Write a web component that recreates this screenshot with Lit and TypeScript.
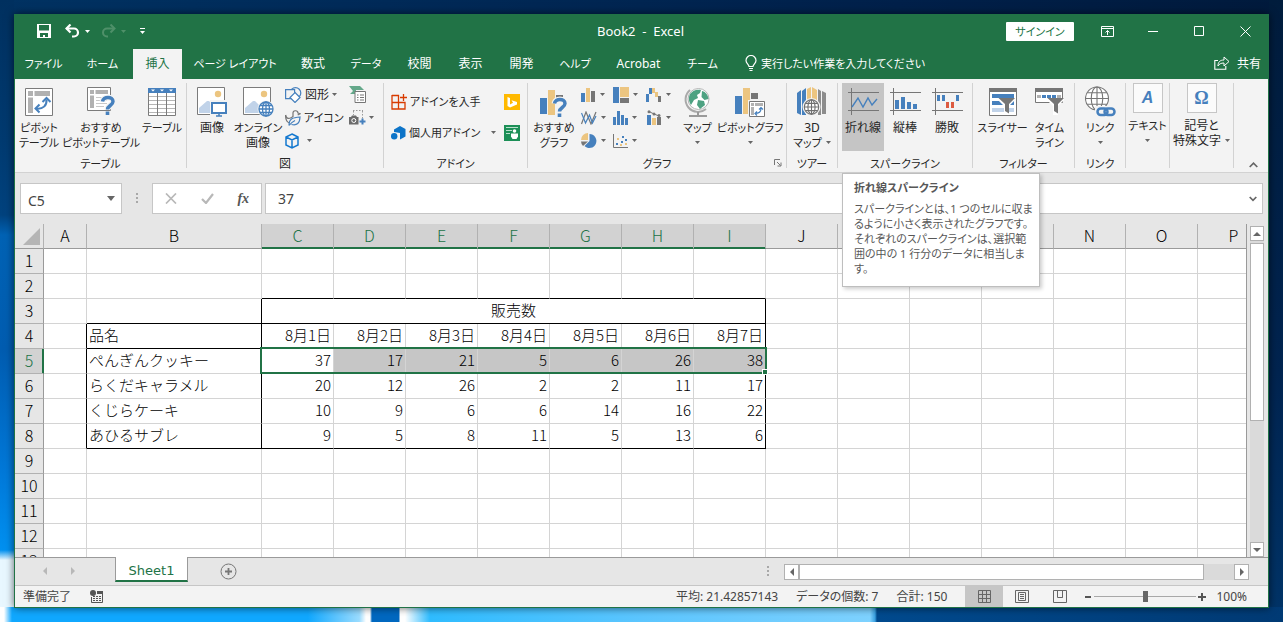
import { LitElement, html, svg, css, nothing } from "lit";
import { customElement } from "lit/decorators.js";
import { classMap } from "lit/directives/class-map.js";

const icon = (w: number, h: number, body: unknown, cls = "") =>
  html`<svg class=${cls} width=${w} height=${h} viewBox="0 0 ${w} ${h}" fill="none" aria-hidden="true">${body}</svg>`;

const caret = icon(5, 3, svg`<path d="M0 0h5L2.500 3z" fill="currentColor"/>`, "caret");

/* ---- title bar ---- */
const saveIcon = icon(14, 14, svg`<path fill-rule="evenodd" fill="#fff" d="M0 0h14v14H0zM2 1v5.500h10V1zM3 9v4h3v-2h2v2h3V9z"/>`);
const undoIcon = icon(15, 14, svg`<path d="M1.500 4.500H9a4 4 0 0 1 0 8H7" stroke="#fff" stroke-width="2.200"/><path d="M5.500 .500L1.500 4.500l4 4" stroke="#fff" stroke-width="2.200"/>`);
const redoIcon = icon(15, 14, svg`<g stroke="#4f9069" stroke-width="2"><path d="M13 4.500H6a4 4 0 0 0 0 8h1"/><path d="M9.500 .500l4 4-4 4"/></g>`);
const customizeIcon = icon(5, 7, svg`<path d="M0 .500h5" stroke="#fff"/><path d="M0 3h5L2.500 6z" fill="#fff"/>`);
const ribbonOptionsIcon = icon(13, 11, svg`<path d="M.500 .500h12v10H.500zM.500 2.500h12M6.500 9V4.500M4.500 6.500l2-2 2 2" stroke="#fff"/>`);
const minIcon = icon(10, 10, svg`<path d="M0 5.500h10" stroke="#fff"/>`);
const maxIcon = icon(10, 10, svg`<path d="M.500 .500h9v9h-9z" stroke="#fff"/>`);
const closeIcon = icon(11, 11, svg`<path d="M.500 .500l10 10M10.500 .500l-10 10" stroke="#fff"/>`);
const bulbIcon = icon(12, 16, svg`<path d="M4 11.500c0-2-3-3-3-6a5 5 0 0 1 10 0c0 3-3 4-3 6zM4 13.500h4M4.500 15.500h3" stroke="#fff" stroke-width="1.200"/>`);
const shareIcon = icon(16, 14, svg`<path d="M4 4.500H.800v8.700h11V10" stroke="#fff" stroke-width="1.100"/><path d="M4 10c0-4 2-6 6-6V1l5 4.500L10 10V7C7 7 5 8 4 10z" stroke="#fff"/>`);

/* ---- ribbon ---- */
const pivotIcon = icon(28, 28, svg`
  <path d="M.500 .500h27v27H.500z" fill="#fff" stroke="#7b7b7b"/>
  <path d="M3 3h5v5H3zM9.500 3H25v5H9.500zM3 9.500h5V25H3z" fill="#b1b1b1"/>
  <path d="M11 20.500c7 1 11-3 10.500-9" stroke="#4680bd" stroke-width="2"/>
  <path d="M17.500 14l4-4 4 4M14.500 16.500l-4 4 4 4" stroke="#4680bd" stroke-width="2"/>`);
const question = (x: number, y: number) => svg`<g transform="translate(${x} ${y})"><path d="M1.500 5.500C2 0 12 0 12 5.500c0 4-5.500 4-5.500 8" stroke="#f3f3f3" stroke-width="6"/><path d="M1.500 5.500C2 0 12 0 12 5.500c0 4-5.500 4-5.500 8" stroke="#4680bd" stroke-width="3.500"/><path d="M4.700 15.500h3.600v3.500H4.700z" fill="#4680bd"/></g>`;
const recPivotIcon = icon(28, 29, svg`
  <path d="M.500 .500h23v23H.500z" fill="#fff" stroke="#7b7b7b"/>
  <path d="M3 3h4v4H3zM8.500 3H21v4H8.500zM3 8.500h4V21H3z" fill="#b1b1b1"/>
  <path d="M9 10.500h11M9 13.500h11M9 16.500h11M9 19.500h8" stroke="#c8c8c8"/>${question(14, 9)}`);
const tableIcon = icon(28, 28, svg`
  <path d="M.500 .500h27v27H.500z" fill="#fff" stroke="#7b7b7b"/>
  <path d="M0 0h28v5H0z" fill="#4680bd"/>
  <path d="M3 1.500h4l-2 2zM12 1.500h4l-2 2zM21 1.500h4l-2 2z" fill="#fff"/>
  <path d="M1 8.500h26M1 12.500h26M1 16.500h26M1 20.500h26M1 24.500h26" stroke="#b5b5b5"/>
  <path d="M9.500 5v22M18.500 5v22" stroke="#7b7b7b"/>`);
const photoBase = svg`
  <path d="M.500 .500h27v27H.500z" fill="#fff" stroke="#7b7b7b"/>
  <circle cx="21" cy="7" r="3.200" fill="#ecc580"/>
  <path d="M2 26v-5l8-7h2l7 7v5z" fill="#c1d3e9"/>`;
const pictureIcon = icon(31, 30, svg`${photoBase}
  <path d="M13 13h18v17H13z" fill="#f3f3f3"/><path d="M15 16h14v10H15z" fill="#fff" stroke="#4680bd" stroke-width="2"/><path d="M19 29h6M22 27v2" stroke="#4680bd" stroke-width="1.500"/>`);
const globe = (cx: number, cy: number, r: number, c: string, bg: string, w = 1.300) => svg`
  <circle cx=${cx} cy=${cy} r=${r} fill=${bg} stroke=${c} stroke-width=${w}/>
  <ellipse cx=${cx} cy=${cy} rx=${r / 2} ry=${r} stroke=${c} stroke-width=${w}/>
  <path d="M${cx} ${cy - r}v${2 * r}M${cx - r} ${cy}h${2 * r}M${cx - r * 0.85} ${cy - r / 2}h${r * 1.7}M${cx - r * 0.85} ${cy + r / 2}h${r * 1.7}" stroke=${c} stroke-width=${w}/>`;
const onlinePictureIcon = icon(31, 30, svg`${photoBase}<circle cx="23" cy="22" r="8.500" fill="#f3f3f3"/>${globe(23, 22, 7, "#4680bd", "#fff")}`);
const shapesIcon = icon(17, 16, svg`
  <circle cx="10.500" cy="6" r="5.300" fill="#f3f3f3" stroke="#4680bd" stroke-width="1.200"/>
  <path d="M.600 2.600h9v9h-9z" fill="#f3f3f3" stroke="#4680bd" stroke-width="1.200"/>
  <path d="M10 5.500l5 5-5 5-5-5z" fill="#fff" stroke="#4680bd" stroke-width="1.200"/>`);
const iconsIcon = icon(16, 16, svg`
  <path d="M.600 5c1 4 3 4 6 2.500L8 6.500V3.500a2.500 2.500 0 0 1 5-.500l2 .800-2.300 1.200M.600 5c-.200 4 1 7 4 8" stroke="#767676" stroke-width="1.200"/>
  <path d="M4 15.500c0-7 4-8 11-8.500-.200 6-3 9-8.500 7.500M4 15.500c2-2.500 4-4 6-5" stroke="#4680bd" stroke-width="1.200"/>`);
const cubeIcon = icon(14, 16, svg`<path d="M7 1l6 3v8l-6 3-6-3V4zM1 4l6 3 6-3M7 7v8" stroke="#1579d0" stroke-width="1.500"/>`);
const screenshotIcon = icon(17, 17, svg`
  <path d="M0 0h11l4 4H7v4H1l3-3z" fill="#64a88a"/>
  <path d="M6 5.500h10.500v11H6z" fill="#fff" stroke="#767676"/>
  <path d="M8 9h1.500M11 9h4M8 11.500h1.500M11 11.500h4M8 14h1.500M11 14h4" stroke="#767676"/>`);
const cameraIcon = icon(17, 15, svg`
  <path d="M4 .500h10M13.500 1v8M4.500 1v4" stroke="#9a9a9a" stroke-dasharray="1.500 1.500"/>
  <path d="M0 7h2l1-1.500h4L8 7h1.500v7.500H0z" fill="#6b6b6b"/><circle cx="4.800" cy="10.500" r="2" stroke="#fff"/>
  <path d="M10.500 11.500h6M13.500 8.500v6" stroke="#4680bd" stroke-width="2"/>`);
const storeIcon = icon(16, 16, svg`<path d="M1 1.500h6.500v13.500M1 1v14h13V8.500H1M12.500 0v7M9 3.500h7" stroke="#d83b01" stroke-width="1.300"/>`);
const myAddinsIcon = icon(15, 14, svg`<path d="M3 3.500L9 0l5.500 3v7.500L9 13.500V7L3 6z" fill="#0d74c8"/><circle cx="3.200" cy="10.300" r="3.200" fill="#0d74c8"/>`);
const bingIcon = icon(16, 16, svg`<path d="M0 0h16v16H0z" fill="#ffb900"/><path d="M3.500 3L6 4v6.500l3-1.700-1.500-2.500L13 8v2.500l-7 3L3.500 12z" fill="#fff"/>`);
const peopleIcon = icon(16, 16, svg`<path d="M0 0h16v16H0z" fill="#1c8f57"/><path d="M2 2.500h12M2 5.500h6M2 8.500h4" stroke="#b9e0cc"/><circle cx="10.500" cy="6" r="1.800" fill="#fff"/><path d="M7 8.500h7v3l-1.500 2.500h-4L7 11.500z" fill="#fff"/>`);
const recChartIcon = icon(28, 30, svg`
  <path d="M0 11h7v16H0z" fill="#4680bd"/><path d="M8 3h7v25H8z" fill="#ecc580"/><path d="M16 8h7v4h-7z" fill="#767676"/>${question(13, 11)}`);
const columnIcon = icon(15, 14, svg`<path d="M0 5h4v9H0z" fill="#4680bd"/><path d="M5 0h4v14H5z" fill="#ecc580"/><path d="M10 3h4v11h-4z" fill="#767676"/>`);
const treemapIcon = icon(16, 16, svg`<path d="M0 0h6v16H0z" fill="#4680bd"/><path d="M7 0h9v10H7z" fill="#ecc580"/><path d="M7 11h9v5H7z" fill="#767676"/>`);
const waterfallIcon = icon(16, 14, svg`<path d="M0 6h3v8H0zM3 0h3v6H3z" fill="#4680bd"/><path d="M6 0h3v5H6zM9 4h3v5H9z" fill="#ecc580"/><path d="M12 8h3v6h-3z" fill="#767676"/>`);
const lineChartIcon = icon(16, 14, svg`<path d="M.500 13L5 1l5 12 5-12" stroke="#767676" stroke-width="1.200"/><path d="M.500 2l4 10 4-8 3 8L15 5" stroke="#4680bd" stroke-width="1.200"/>`);
const histogramIcon = icon(15, 14, svg`<path d="M0 6h3v8H0zM4 0h3v14H4zM8 4h3v10H8zM12 7h3v7h-3z" fill="#4680bd"/>`);
const comboIcon = icon(16, 15, svg`<path d="M1 5h4v10H1z" fill="#4680bd"/><path d="M6 8h4v7H6z" fill="#ecc580"/><path d="M11 7h4v8h-4z" fill="#767676"/><path d="M3 1.500L8 4l5 2" stroke="#767676"/><circle cx="3" cy="1.700" r="1.500" fill="#767676"/><circle cx="8" cy="4" r="1.500" fill="#767676"/><circle cx="13" cy="5.500" r="1.500" fill="#767676"/>`);
const pieIcon = icon(16, 16, svg`<path d="M8.500 8V1a7 7 0 1 1-5 12z" fill="#4680bd"/><path d="M7 7V0a7 7 0 0 0-7 7z" fill="#ecc580"/><path d="M7 8.500H0a7 7 0 0 0 2 4.500z" fill="#767676"/>`);
const scatterIcon = icon(15, 14, svg`<path d="M.500 0v13.500H15" stroke="#767676"/><path d="M3 9h2v2H3zM9 2h2v2H9zM8 7h2v2H8zM12 5h2v2h-2z" fill="#4680bd"/><path d="M4 4h2v2H4zM7 10h2v2H7zM12 9h2v2h-2z" fill="#ecc580"/>`);
const mapIcon = icon(27, 32, svg`
  <path d="M6 4a12 12 0 1 0 16 19" stroke="#a9a9a9" stroke-width="2"/>
  <path d="M14 26v3M5 30h18" stroke="#9a9a9a" stroke-width="2"/>
  <circle cx="14.500" cy="13" r="10.500" fill="#fff" stroke="#b5b5b5"/>
  <path d="M6 8c3-4 7-5 11-4l-1 3-3 2 1 3-4 2-3 5c-2-3-3-7-1-11zM18 5c4 1 6 4 6.500 8l-4 1-3-3zM14 14l6 1 1 4-5 4-3-4z" fill="#4ea282"/>`);
const pivotChartIcon = icon(31, 30, svg`
  <path d="M0 9h7v18H0z" fill="#4680bd"/><path d="M8 1h7v26H8z" fill="#ecc580"/><path d="M16 6h7v6h-7z" fill="#767676"/>
  <path d="M13 13h18v17H13z" fill="#f3f3f3"/><path d="M14.500 14.500h15v15h-15z" fill="#fff" stroke="#767676"/>
  <path d="M16 16h3v3h-3zM20 16h8v3h-8zM16 20h3v8h-3z" fill="#b1b1b1"/>
  <path d="M20 26.500c4 0 6-1 6-5M22 24.500l-2 2 2 2M24 22.500l2-2 2 2" stroke="#4680bd" stroke-width="1.200"/>`);
const map3dIcon = icon(30, 30, svg`
  <path d="M0 6l4-3v25l-4-2zM5 4l4-3v27H5z" fill="#4680bd"/><path d="M10 2l4-2v26h-4zM15 0l5 3v23h-5z" fill="#ecc580"/>
  <path d="M21 2l3 2v24h-3zM25 4l4 2v21h-4z" fill="#8c8c8c"/>
  <circle cx="14.500" cy="20" r="9" fill="#f3f3f3"/>${globe(14.5, 20, 7.2, "#6f6f6f", "#fff", 1.1)}`);
const sparkFrame = svg`<path d="M0 4.500h31M0 22.500h31M3.500 0v27" stroke="#767676"/>`;
const sparkLineIcon = icon(31, 27, svg`${sparkFrame}<path d="M4 19l6-9 5 9 5-9 4 7 5-6" stroke="#4680bd" stroke-width="1.400"/>`);
const sparkColumnIcon = icon(31, 27, svg`${sparkFrame}<path d="M5 12h4v9H5zM11 9h4v12h-4zM17 14h4v7h-4zM23 16h4v5h-4z" fill="#4680bd"/>`);
const sparkWinIcon = icon(31, 27, svg`${sparkFrame}<path d="M5 7h3v6H5zM10 7h3v6h-3zM24 7h3v6h-3z" fill="#4680bd"/><path d="M14 14h3v6h-3zM19 14h3v6h-3z" fill="#dd5b41"/>`);
const funnel = (x: number, y: number) => svg`<g transform="translate(${x} ${y})"><path d="M0 0h17v2l-6 6v9H6V8L0 2z" fill="#fff"/><path d="M.500 0h16.500L11 6v9.500L7 13V6z" fill="#767676"/></g>`;
const slicerIcon = icon(28, 28, svg`
  <path d="M.500 .500h27v27H.500z" fill="#fff" stroke="#767676"/><path d="M0 0h28v4H0z" fill="#767676"/>
  <path d="M3 6h22v4H3zM3 13h22v4H3z" fill="#4680bd"/><path d="M3 20h22v4H3z" fill="#c1d3e9"/>${funnel(9, 10)}`);
const timelineIcon = icon(29, 27, svg`
  <path d="M.500 .500h27v14H.500z" fill="#fff" stroke="#767676"/><path d="M0 0h28v4H0z" fill="#767676"/>
  <path d="M2 7h4v3H2zM22 7h4v3h-4z" fill="#b1b1b1"/><path d="M7 7h4v3H7zM12 7h4v3h-4zM17 7h4v3h-4z" fill="#4680bd"/>${funnel(12, 10)}`);
const linkIcon = icon(31, 31, svg`${globe(12, 12.5, 11.5, "#767676", "#fff", 1.1)}
  <rect x="10" y="20" width="21" height="11" fill="#f3f3f3"/>
  <rect x="12.500" y="22.500" width="10" height="6.500" rx="3.200" stroke="#4680bd" stroke-width="2.500"/><rect x="19.500" y="22.500" width="10" height="6.500" rx="3.200" stroke="#4680bd" stroke-width="2.500"/>`);
const launcherIcon = icon(8, 8, svg`<path d="M.500 6V.500H6M3 3l3.500 3.500M7 3.500V7H3.500" stroke="#767676"/>`);
const collapseIcon = icon(9, 6, svg`<path d="M.700 5l3.800-3.800L8.300 5" stroke="#666" stroke-width="1.700"/>`);

/* ---- formula bar, sheet tabs, status bar ---- */
const cancelIcon = icon(12, 11, svg`<path d="M1 .500l10 10M11 .500L1 10.500" stroke="#b8b8b8" stroke-width="1.700"/>`);
const enterIcon = icon(13, 11, svg`<path d="M1 6l4 4 7-9" stroke="#b8b8b8" stroke-width="2.200"/>`);
const dotsIcon = icon(2, 11, svg`<path d="M0 0h2v2H0zM0 4h2v2H0zM0 8h2v2H0z" fill="#a8a8a8"/>`);
const expandIcon = icon(8, 6, svg`<path d="M.700 1L4 4.300 7.300 1" stroke="#666" stroke-width="1.700"/>`);
const cornerIcon = icon(17, 17, svg`<path d="M17 0v17H0z" fill="#b5b5b5"/>`);
const arrow = (d: string) => icon(8, 8, svg`<path d=${d} fill="currentColor"/>`);
const UP = "M0 6h8L4 2z", DOWN = "M0 2h8L4 6z", LEFT = "M6 0v8L2 4z", RIGHT = "M2 0v8l4-4z";
const addIcon = icon(17, 17, svg`<circle cx="8.500" cy="8.500" r="7.500" stroke="#767676"/><path d="M8.500 5v7M5 8.500h7" stroke="#767676" stroke-width="1.800"/>`);
const macroIcon = icon(13, 13, svg`<circle cx="3" cy="3" r="3" fill="#555"/><path d="M7 1h6v3H7z" fill="#555"/><path d="M1.500 7v5.500h11V3" stroke="#555"/><path d="M3 6.500h2M6 6.500h2M9 6.500h2M3 8.500h2M6 8.500h2M9 8.500h2M3 10.500h2M6 10.500h2M9 10.500h2" stroke="#555"/>`);
const normalViewIcon = icon(13, 13, svg`<path d="M.500 .500h12v12H.500zM4.500 0v13M8.500 0v13M0 4.500h13M0 8.500h13" stroke="#666"/>`);
const pageViewIcon = icon(14, 13, svg`<path d="M.500 .500h13v12H.500zM3.500 2.500h7v8h-7zM5 4.500h4M5 6.500h4M5 8.500h4" stroke="#666"/>`);
const breakViewIcon = icon(14, 13, svg`<path d="M.500 .500h13v12H.500zM4.500 0v7.500h5V0M9.500 7.500V.500" stroke="#666"/>`);

const TABS = ["ファイル", "ホーム", "挿入", "ページ レイアウト", "数式", "データ", "校閲", "表示", "開発", "ヘルプ", "Acrobat", "チーム"];
const CHARTS: [string, unknown][] = [
  ["縦棒/横棒", columnIcon], ["階層構造", treemapIcon], ["ウォーターフォール", waterfallIcon],
  ["折れ線/面", lineChartIcon], ["統計", histogramIcon], ["複合", comboIcon],
  ["円/ドーナツ", pieIcon], ["散布図", scatterIcon],
];

const COLS = "ABCDEFGHIJKLMNOP".split("");
const CELLS: Record<number, (string | number)[]> = {
  4: ["品名", "8月1日", "8月2日", "8月3日", "8月4日", "8月5日", "8月6日", "8月7日"],
  5: ["ぺんぎんクッキー", 37, 17, 21, 5, 6, 26, 38],
  6: ["らくだキャラメル", 20, 12, 26, 2, 2, 11, 17],
  7: ["くじらケーキ", 10, 9, 6, 6, 14, 16, 22],
  8: ["あひるサブレ", 9, 5, 8, 11, 5, 13, 6],
};

/* Labels written in kana alone are set one size smaller than those with kanji. */
const isKana = (t: unknown) => typeof t === "string" && /^[\u3040-\u30ff ]+$/.test(t);
const label = (t: unknown) => (isKana(t) ? html`<span class="kana">${t}</span>` : t);

const big = (art: unknown, lines: unknown[], cls = "") =>
  html`<button class="big ${cls}"><span class="art">${art}</span>${lines.map((l) => html`<span class="line">${label(l)}</span>`)}</button>`;

@customElement("app-root")
export class AppRoot extends LitElement {
  static styles = css`
    :host {
      display: flex;
      height: 100vh;
      box-sizing: border-box;
      padding: 14px;
      overflow: hidden;
      font: 12px/15px "Noto Sans", "Noto Sans CJK JP", sans-serif;
      font-feature-settings: "palt";
      color: #262626;
      background:
        linear-gradient(90deg, #fff 0 4px, #10a8ff 12px 24%, #9adcff 28%, #fff 366px 370px, #0068c0 372px 399px, #fff 400px 405px, #2fbcff 430px, #5cc6ff 50%, #7ed2ff 870px, #3aa0e0 875px, #004a8e 877px, #003a74) bottom / 100% 15px no-repeat,
        linear-gradient(180deg, #00305f 0, #003a70 140px, #00427e 215px, #0062b4 235px, #005cb0 350px, #0078d8 470px, #0090f0 550px, #e8f7ff 560px 100%) left / 14px 100% no-repeat,
        linear-gradient(180deg, #001c3c, #002450 60%, #003468) right / 14px 100% no-repeat,
        linear-gradient(90deg, #003262, #002a58 30%, #00204a 70%, #001a3c);
    }
    button, input { font: inherit; font-feature-settings: inherit; color: inherit; margin: 0; padding: 0; border: 0; background: none; border-radius: 0; outline: 0; }
    button { display: flex; align-items: center; justify-content: center; white-space: nowrap; flex: none; }
    svg { display: block; flex: none; }
    .kana { font-size: 11px; }
    .caret { color: #666; }
    .window {
      flex: 1;
      min-width: 0;
      display: flex;
      flex-direction: column;
      border: 1px solid #217346;
      background: #e6e6e6;
      box-shadow: 0 0 8px rgba(0, 0, 0, 0.6);
    }

    .title { display: grid; grid-template-columns: 1fr auto 1fr; align-items: center; height: 32px; padding-bottom: 2px; background: #217346; color: #fff; }
    .quick { display: flex; align-items: center; padding-left: 22px; gap: 5px; }
    .quick .caret { color: #fff; }
    .quick .dim .caret { color: #4f9069; }
    .quick button { gap: 5px; }
    .quick button:first-child { margin-right: 9px; }
    .quick .dim { margin: 0 9px 0 6px; }
    .caption { white-space: pre; font-size: 13px; padding-right: 2px; }
    .sys { display: flex; justify-content: flex-end; align-items: center; }
    .sys button { width: 46px; height: 30px; }
    .sys .signin { width: 68px; height: 19px; margin-right: 10px; background: #fff; color: #217346; border-radius: 1px; }
    .tabs { display: flex; height: 30px; background: #217346; color: #fff; }
    .tablist { display: grid; grid-template-columns: 57px 61px 49px 106px 50px 56px 51px 51px 51px 56px 71px 57px; }
    .tablist button, .tell, .share { padding-bottom: 2px; }
    .tablist .on { background: #f3f3f3; color: #217346; }
    .tell { padding-left: 14px; gap: 4px; font-size: 11px; }
    .share { margin-left: auto; padding-right: 7px; gap: 7px; }

    .ribbon { display: flex; height: 93px; background: #f3f3f3; border-bottom: 1px solid #d2d2d2; }
    .group { position: relative; display: flex; flex-direction: column; margin: 4px 0; border-right: 1px solid #d2d2d2; box-sizing: border-box; flex: none; }
    .body { flex: 1; display: flex; }
    .name { text-align: center; height: 15px; margin-bottom: -3px; }
    .big { flex-direction: column; justify-content: flex-start; height: 68px; }
    .art { display: flex; height: 37px; align-items: center; justify-content: center; }
    .line { display: flex; align-items: center; height: 15px; gap: 4px; }
    .on-art { background: #c5c5c5; }
    .g-table { width: 172px; }
    .g-table .body { display: grid; grid-template-columns: 48px 76px 46px; }
    .g-pic { width: 197px; }
    .g-pic .body { padding-left: 2px; }
    .g-pic .big { width: 46px; }
    .small { display: flex; flex-direction: column; }
    .small button { height: 23px; gap: 3px; justify-content: flex-start; }
    .small .model { gap: 8px; }
    .g-pic .small { width: 60px; padding-left: 4px; }
    .g-pic .small:last-child { width: 30px; }
    .g-addin { width: 144px; }
    .addins { display: grid; grid-template-columns: 105px 16px; column-gap: 8px; grid-auto-rows: 31px; padding: 3px 0 0 7px; align-items: center; font-size: 11px; }
    .addins button { justify-content: flex-start; gap: 3px; }
    .addins .wide .caret { margin-left: auto; }
    .g-chart { width: 259px; }
    .g-chart .big { width: 52px; }
    .charts { display: grid; grid-template-columns: 32px 33px 30px; grid-auto-rows: 23px; margin-left: 1px; }
    .charts button { justify-content: flex-start; gap: 4px; }
    .g-chart .map { width: 43px; }
    .g-chart .pivot { width: 62px; }
    .launch { position: absolute; right: 3px; bottom: 0; width: 10px; height: 10px; }
    .g-tour { width: 51px; }
    .g-spark { width: 135px; }
    .g-spark .body { padding-left: 4px; }
    .g-spark .big { width: 42px; }
    .g-filter { width: 102px; }
    .g-filter .body { padding-left: 6px; }
    .g-filter .big { width: 47px; }
    .g-link { width: 51px; }
    .g-text { width: 44px; }
    .g-sym { width: 64px; }
    .g-tour .big, .g-link .big, .g-text .big, .g-sym .big { flex: 1; }
    .g-text .art, .g-sym .art { height: 35px; align-items: flex-start; }
    .tile { display: grid; place-items: center; width: 28px; height: 28px; border: 1px solid #c6c6c6; background: #fbfbfb; color: #4680bd; font: 700 18px/20px "Liberation Serif", serif; }
    .tile.slant { font: italic 700 16px/20px "Liberation Sans", sans-serif; }
    .collapse { margin: auto 10px 4px auto; }

    .tip {
      position: absolute;
      z-index: 5;
      left: 4px;
      top: 90px;
      width: 185px;
      padding: 6px 0 10px 11px;
      border: 1px solid #bebebe;
      background: #fff;
      box-shadow: 2px 2px 4px rgba(0, 0, 0, 0.2);
      color: #575757;
      font-size: 11px;
      white-space: nowrap;
    }
    .tip b { display: block; margin-bottom: 6px; font-weight: 700; }

    .formula { display: flex; align-items: center; height: 51px; padding: 0 5px; font-size: 14px; color: #444; }
    .box { display: flex; align-items: center; height: 29px; border: 1px solid #c6c6c6; background: #fff; }
    .box input { flex: 1; min-width: 0; padding: 0 12px; }
    .namebox { width: 100px; }
    .namebox input { padding: 4px 0 0 7px; }
    .namebox button { width: 20px; }
    .namebox .caret { width: 8px; height: 5px; }
    .formula > svg { margin: 0 14px; }
    .tools { width: 108px; justify-content: space-around; margin-right: 3px; }
    .tools .fx { font: italic 700 14px/16px "Liberation Serif", serif; color: #555; }
    .entry { flex: 1; }
    .entry button { width: 18px; }

    .sheet { flex: 1; min-height: 0; display: flex; }
    .grid { flex: 1; min-width: 0; overflow: hidden; border-right: 1px solid #9a9a9a; }
    table { border-collapse: separate; border-spacing: 0; table-layout: fixed; width: 1255px; font: 300 15px/22px "Noto Sans CJK JP", sans-serif; font-feature-settings: normal; color: #000; }
    .c-head { width: 29px; } .c-a { width: 43px; } .c-b { width: 175px; } .c-n { width: 72px; }
    th, td { padding: 0 2px 2px; height: 22px; border: 0 solid #d4d4d4; border-width: 0 1px 1px 0; font-weight: inherit; white-space: nowrap; overflow: hidden; }
    td { background: #fff; text-align: right; }
    td.txt { text-align: left; }
    td.mid { text-align: center; }
    th { background: #e6e6e6; text-align: center; padding: 0 0 2px; }
    thead th { border-color: #b1b1b1; border-bottom-color: #9a9a9a; font-size: 16px; }
    tbody th { border-right-color: #9a9a9a; border-bottom-color: #b1b1b1; font-size: 16px; }
    th.sel { background: #d2d2d2; color: #217346; }
    thead th.sel { box-shadow: inset 0 -1px #217346; border-bottom-color: #217346; }
    tbody th.sel { box-shadow: inset -1px 0 #217346; border-right-color: #217346; }
    .corner svg { margin: 3px 3px 0 auto; }
    td.bb { border-bottom-color: #000; }
    td.br { border-right-color: #000; }
    td.fill { background: #c6c6c6; }
    td.active { position: relative; overflow: visible; }
    .range { position: absolute; z-index: 2; left: -2px; top: -2px; width: 503px; height: 23px; border: 2px solid #217346; pointer-events: none; }
    .range::after { content: ""; position: absolute; right: -3px; bottom: -3px; width: 4px; height: 4px; border: 1px solid #fff; background: #217346; }

    .vbar { width: 14px; padding: 2px 4px 0 3px; display: flex; flex-direction: column; }
    .vbar button, .hbar button { border: 1px solid #b1b1b1; background: #fff; color: #666; box-sizing: border-box; }
    .vbar button { height: 15px; }
    .track { flex: 1; display: flex; background: #dadada; }
    .vbar .track { flex-direction: column; }
    .thumb { background: #fff; border: 1px solid #b1b1b1; box-sizing: border-box; }
    .vbar .thumb { height: 59%; margin-top: 2px; }

    .sheets { display: flex; height: 28px; align-items: flex-start; color: #b8b8b8; }
    .nav { display: flex; box-sizing: border-box; width: 100px; height: 27px; padding: 0 38px 0 26px; justify-content: space-between; border-top: 1px solid #9a9a9a; }
    .sheettab { width: 73px; height: 25px; box-sizing: border-box; padding-top: 4px; background: #fff; color: #217346; border: 0 solid #9a9a9a; border-width: 0 1px; border-bottom: 2px solid #217346; font: 13px/16px "DejaVu Sans", Verdana, sans-serif; }
    .rest { flex: 1; display: flex; align-items: center; height: 28px; box-sizing: border-box; border-top: 1px solid #9a9a9a; padding: 0 19px 0 32px; }
    .rest > svg { margin: 0 15px 0 auto; }
    .hbar { display: flex; width: 465px; height: 16px; }
    .hbar button { width: 15px; }
    .hbar .thumb { width: 93%; }

    .status { display: flex; align-items: center; height: 21px; border-top: 1px solid #c6c6c6; background: #f3f3f3; color: #444; padding: 0 21px 0 8px; }
    .status .stats { margin-left: auto; display: flex; gap: 18px; padding-right: 18px; }
    .status .macro { margin-left: 19px; }
    .view { width: 38px; height: 21px; }
    .view.on { background: #c6c6c6; }
    .zoom { display: flex; align-items: center; gap: 2px; margin-left: 5px; }
    .zoom button { width: 8px; height: 12px; }
    .zoom input { appearance: none; width: 102px; height: 14px; background: linear-gradient(#a8a8a8, #a8a8a8) center / 100% 1px no-repeat; }
    .zoom input::-webkit-slider-thumb { appearance: none; width: 5px; height: 11px; background: #666; }
    .pct { margin-left: 10px; }
  `;

  private cell(row: number, c: number) {
    const v = CELLS[row]?.[c - 1];
    const inTable = c >= 1 && c <= 8;
    const cls = {
      txt: c === 1,
      fill: row === 5 && c > 2 && c <= 8,
      active: row === 5 && c === 2,
      bb: (row === 2 && c > 1 && inTable) || ([3, 4, 8].includes(row) && inTable),
      br: (c === 0 && row >= 4 && row <= 8) || ((c === 1 || c === 8) && row >= 3 && row <= 8),
    };
    return html`<td class=${classMap(cls)}>${v ?? nothing}${cls.active ? html`<div class="range"></div>` : nothing}</td>`;
  }

  private row(row: number) {
    const cells = COLS.map((_, c) => {
      if (row === 3 && c === 2) return html`<td class="mid bb br" colspan="7">販売数</td>`;
      if (row === 3 && c > 2 && c <= 8) return nothing;
      return this.cell(row, c);
    });
    return html`<tr><th scope="row" class=${row === 5 ? "sel" : ""}>${row}</th>${cells}</tr>`;
  }

  render() {
    return html`
      <div class="window">
        <header class="title">
          <div class="quick">
            <button aria-label="上書き保存">${saveIcon}</button>
            <button aria-label="元に戻す">${undoIcon}${caret}</button>
            <button class="dim" aria-label="やり直し">${redoIcon}${caret}</button>
            <button aria-label="クイック アクセス ツール バー">${customizeIcon}</button>
          </div>
          <div class="caption">Book2  -  Excel</div>
          <div class="sys">
            <button class="signin">${label("サインイン")}</button>
            <button aria-label="リボンの表示オプション">${ribbonOptionsIcon}</button>
            <button aria-label="最小化">${minIcon}</button>
            <button aria-label="最大化">${maxIcon}</button>
            <button aria-label="閉じる">${closeIcon}</button>
          </div>
        </header>
        <nav class="tabs">
          <div class="tablist">${TABS.map((t) => html`<button class=${t === "挿入" ? "on" : ""}>${label(t)}</button>`)}</div>
          <button class="tell">${bulbIcon}実行したい作業を入力してください</button>
          <button class="share">${shareIcon}共有</button>
        </nav>

        <section class="ribbon">
          <div class="group g-table">
            <div class="body">
              ${big(pivotIcon, ["ピボット", "テーブル"])}
              ${big(recPivotIcon, ["おすすめ", "ピボットテーブル"])}
              ${big(tableIcon, ["テーブル"])}
            </div>
            <div class="name">${label("テーブル")}</div>
          </div>
          <div class="group g-pic">
            <div class="body">
              ${big(pictureIcon, ["画像"])}
              ${big(onlinePictureIcon, ["オンライン", "画像"])}
              <div class="small">
                <button>${shapesIcon}図形${caret}</button>
                <button>${iconsIcon}${label("アイコン")}</button>
                <button class="model" aria-label="3D モデル">${cubeIcon}${caret}</button>
              </div>
              <div class="small">
                <button aria-label="SmartArt">${screenshotIcon}</button>
                <button aria-label="スクリーンショット">${cameraIcon}${caret}</button>
              </div>
            </div>
            <div class="name">図</div>
          </div>
          <div class="group g-addin">
            <div class="body">
              <div class="addins">
                <button>${storeIcon}アドインを入手</button>
                <button aria-label="Bing">${bingIcon}</button>
                <button class="wide">${myAddinsIcon}個人用アドイン${caret}</button>
                <button aria-label="People Graph">${peopleIcon}</button>
              </div>
            </div>
            <div class="name">${label("アドイン")}</div>
          </div>
          <div class="group g-chart">
            <div class="body">
              ${big(recChartIcon, ["おすすめ", "グラフ"])}
              <div class="charts">${CHARTS.map(([n, i]) => html`<button aria-label=${n}>${i}${caret}</button>`)}</div>
              ${big(mapIcon, ["マップ", caret], "map")}
              ${big(pivotChartIcon, ["ピボットグラフ", caret], "pivot")}
            </div>
            <div class="name">${label("グラフ")}</div>
            <button class="launch" aria-label="グラフの詳細">${launcherIcon}</button>
          </div>
          <div class="group g-tour">
            <div class="body">${big(map3dIcon, ["3D", html`${label("マップ")}${caret}`])}</div>
            <div class="name">${label("ツアー")}</div>
          </div>
          <div class="group g-spark">
            <div class="body">
              ${big(sparkLineIcon, ["折れ線"], "on-art")}
              ${big(sparkColumnIcon, ["縦棒"])}
              ${big(sparkWinIcon, ["勝敗"])}
            </div>
            <div class="name">${label("スパークライン")}</div>
            <div class="tip" role="tooltip">
              <b>折れ線スパークライン</b>
              スパークラインとは、1 つのセルに収ま<br />るように小さく表示されたグラフです。<br />それぞれのスパークラインは、選択範<br />囲の中の 1 行分のデータに相当しま<br />す。
            </div>
          </div>
          <div class="group g-filter">
            <div class="body">
              ${big(slicerIcon, ["スライサー"])}
              ${big(timelineIcon, ["タイム", "ライン"])}
            </div>
            <div class="name">${label("フィルター")}</div>
          </div>
          <div class="group g-link">
            <div class="body">${big(linkIcon, ["リンク", caret])}</div>
            <div class="name">${label("リンク")}</div>
          </div>
          <div class="group g-text">
            <div class="body">${big(html`<span class="tile slant">A</span>`, ["テキスト", caret])}</div>
          </div>
          <div class="group g-sym">
            <div class="body">${big(html`<span class="tile">Ω</span>`, ["記号と", html`特殊文字${caret}`])}</div>
          </div>
          <button class="collapse" aria-label="リボンを折りたたむ">${collapseIcon}</button>
        </section>

        <section class="formula">
          <div class="box namebox"><input aria-label="名前ボックス" .value=${"C5"} /><button aria-label="名前の一覧">${caret}</button></div>
          ${dotsIcon}
          <div class="box tools">
            <button aria-label="キャンセル">${cancelIcon}</button>
            <button aria-label="入力">${enterIcon}</button>
            <button class="fx" aria-label="関数の挿入">fx</button>
          </div>
          <div class="box entry"><input aria-label="数式バー" .value=${"37"} /><button aria-label="数式バーの展開">${expandIcon}</button></div>
        </section>

        <section class="sheet">
          <div class="grid">
            <table>
              <colgroup>
                <col class="c-head" /><col class="c-a" /><col class="c-b" />${COLS.slice(2).map(() => html`<col class="c-n" />`)}
              </colgroup>
              <thead>
                <tr>
                  <th class="corner">${cornerIcon}</th>
                  ${COLS.map((c, i) => html`<th scope="col" class=${i >= 2 && i <= 8 ? "sel" : ""}>${c}</th>`)}
                </tr>
              </thead>
              <tbody>${Array.from({ length: 13 }, (_, i) => this.row(i + 1))}</tbody>
            </table>
          </div>
          <div class="vbar">
            <button aria-label="上へ">${arrow(UP)}</button>
            <div class="track"><div class="thumb"></div></div>
            <button aria-label="下へ">${arrow(DOWN)}</button>
          </div>
        </section>

        <section class="sheets">
          <div class="nav"><button aria-label="前のシート">${arrow(LEFT)}</button><button aria-label="次のシート">${arrow(RIGHT)}</button></div>
          <button class="sheettab">Sheet1</button>
          <div class="rest">
            <button aria-label="新しいシート">${addIcon}</button>
            ${dotsIcon}
            <div class="hbar">
              <button aria-label="左へ">${arrow(LEFT)}</button>
              <div class="track"><div class="thumb"></div></div>
              <button aria-label="右へ">${arrow(RIGHT)}</button>
            </div>
          </div>
        </section>

        <footer class="status">
          <span>準備完了</span>
          <button class="macro" aria-label="マクロの記録">${macroIcon}</button>
          <div class="stats"><span>平均: 21.42857143</span><span>データの個数: 7</span><span>合計: 150</span></div>
          <button class="view on" aria-label="標準">${normalViewIcon}</button>
          <button class="view" aria-label="ページ レイアウト">${pageViewIcon}</button>
          <button class="view" aria-label="改ページ プレビュー">${breakViewIcon}</button>
          <div class="zoom">
            <button aria-label="縮小">${icon(6, 2, svg`<path d="M0 0h6v2H0z" fill="#555"/>`)}</button>
            <input type="range" min="0" max="100" value="50" aria-label="ズーム" />
            <button aria-label="拡大">${icon(8, 8, svg`<path d="M0 4h8M4 0v8" stroke="#555" stroke-width="2"/>`)}</button>
          </div>
          <span class="pct">100%</span>
        </footer>
      </div>
    `;
  }
}
